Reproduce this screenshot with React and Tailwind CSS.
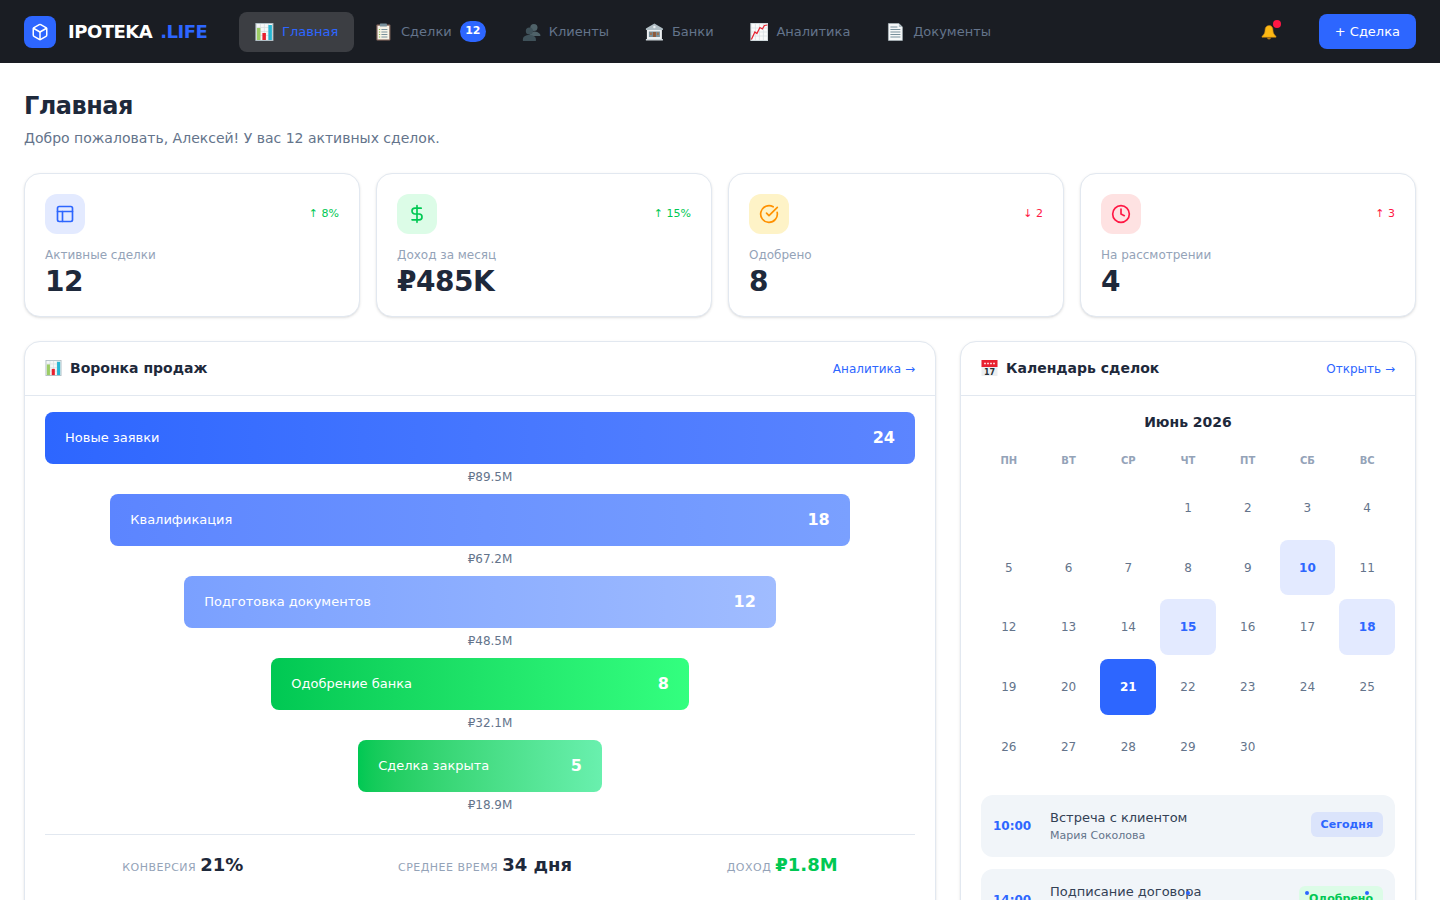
import { Box, CircleCheckBig, Clock, DollarSign, Layout } from "lucide-react";

// Рисованные эмодзи: ширина блока задаётся снаружи через className
function ChartEmoji({ className }) {
  return (
    <svg viewBox="0 0 18 18" className={className}>
      <rect x="0.5" y="0.5" width="17" height="17" fill="#f5f7f7" stroke="#b0bec5" />
      <path d="M1 4.5h16M1 8.5h16M1 12.5h16M5 1v16M9 1v16M13 1v16" stroke="#d5dde0" strokeWidth="0.7" />
      <rect x="1.5" y="5" width="3.5" height="12" fill="#9ccc65" />
      <rect x="7" y="10" width="3.5" height="7" fill="#e8202e" />
      <rect x="13" y="2" width="3.5" height="15" fill="#26b6d4" />
    </svg>
  );
}

function ClipboardEmoji({ className }) {
  return (
    <svg viewBox="0 0 18 18" className={className}>
      <rect x="2" y="1.5" width="14" height="16" rx="1" fill="#8d6e63" />
      <rect x="3.2" y="2.8" width="11.6" height="13.6" fill="#f7f3e8" />
      <rect x="5.5" y="0.5" width="7" height="3" rx="0.6" fill="#78909c" />
      <path d="M7 6.5h6M7 9h6M7 11.5h6M7 14h6" stroke="#78909c" strokeWidth="1" />
      <path d="M4.5 6.5h1.3M4.5 9h1.3M4.5 11.5h1.3M4.5 14h1.3" stroke="#8bc34a" strokeWidth="1" />
    </svg>
  );
}

function PeopleEmoji({ className }) {
  return (
    <svg viewBox="0 0 18 18" className={className}>
      <circle cx="11.5" cy="4.5" r="3.6" fill="#4f6269" />
      <path d="M7 13c0-3 2-4.5 4.5-4.5S18 10 18 12.5V13H7z" fill="#4f6269" />
      <circle cx="7" cy="8" r="3.6" fill="#3f5159" />
      <path d="M0.5 18v-1.5C0.5 13.5 3 12 7 12s6.5 1.5 6.5 4.5V18H0.5z" fill="#3f5159" />
    </svg>
  );
}

function BankEmoji({ className }) {
  return (
    <svg viewBox="0 0 18 18" className={className}>
      <path d="M9 0.5 17.5 5.5V7H0.5V5.5z" fill="#b0bec5" />
      <circle cx="9" cy="4" r="1.2" fill="#eceff1" />
      <rect x="1.5" y="7" width="15" height="9" fill="#eceff1" />
      <rect x="3.5" y="8.5" width="11" height="5.5" fill="#78909c" />
      <rect x="7.5" y="9" width="3" height="5" fill="#8d5a3c" />
      <rect x="4.5" y="9.5" width="2" height="2.5" fill="#a1704f" />
      <rect x="11.5" y="9.5" width="2" height="2.5" fill="#a1704f" />
      <rect x="0.5" y="16" width="17" height="1.5" fill="#cfd8dc" />
    </svg>
  );
}

function TrendEmoji({ className }) {
  return (
    <svg viewBox="0 0 18 18" className={className}>
      <rect x="0.5" y="0.5" width="17" height="17" fill="#fafafa" stroke="#cfd8dc" />
      <path d="M1 5h16M1 9h16M1 13h16M5 1v16M9 1v16M13 1v16" stroke="#d5dde0" strokeWidth="0.7" />
      <path d="M1 16.5 4.5 9 6.5 10.5 9.5 4.5 12 6 14 2.5 17 2" fill="none" stroke="#e8202e" strokeWidth="1.2" />
    </svg>
  );
}

function PageEmoji({ className }) {
  return (
    <svg viewBox="0 0 18 18" className={className}>
      <path d="M2 0.5h10.5L16 4v13.5H2z" fill="#f5f7f8" stroke="#b0bec5" strokeWidth="0.6" />
      <path d="M12.5 0.5V4H16z" fill="#b0bec5" />
      <path d="M4 4h7M4 6.5h10M4 9h10M4 11.5h10M4 14h10" stroke="#78909c" strokeWidth="1.1" />
    </svg>
  );
}

function BellEmoji({ className }) {
  return (
    <svg viewBox="0 0 16 16" className={className}>
      <path d="M8 1.5c-2.8 0-4 2.2-4 4.8 0 2.6-1 4.2-3 6v1h14v-1c-2-1.8-3-3.4-3-6 0-2.6-1.2-4.8-4-4.8z" fill="#fdb813" stroke="#b77a14" strokeWidth="0.6" />
      <path d="M6 13.5a2 2 0 0 0 4 0z" fill="#b77a14" />
    </svg>
  );
}

function CalendarEmoji({ className }) {
  return (
    <svg viewBox="0 0 16 16" className={className}>
      <rect x="0" y="0" width="16" height="16" fill="#eceff1" />
      <rect x="0" y="0" width="16" height="7" fill="#e8202e" />
      <path d="M2.5 3.5h11" stroke="#ffc9cd" strokeWidth="1.4" strokeDasharray="2 1" />
      <text x="8" y="14.6" textAnchor="middle" fontSize="8" fill="#263238">17</text>
    </svg>
  );
}

const navItems = [
  { icon: ChartEmoji, label: "Главная", active: true },
  { icon: ClipboardEmoji, label: "Сделки", badge: 12 },
  { icon: PeopleEmoji, label: "Клиенты" },
  { icon: BankEmoji, label: "Банки" },
  { icon: TrendEmoji, label: "Аналитика" },
  { icon: PageEmoji, label: "Документы" },
];

const stats = [
  { icon: Layout, box: "bg-[#e3eaff]", color: "text-[#2d66ff]", trend: "↑ 8%", trendColor: "text-[#00c853]", label: "Активные сделки", value: "12" },
  { icon: DollarSign, box: "bg-[#dcfce7]", color: "text-[#00c853]", trend: "↑ 15%", trendColor: "text-[#00c853]", label: "Доход за месяц", value: "₽485K" },
  { icon: CircleCheckBig, box: "bg-[#fef3c7]", color: "text-[#ff9100]", trend: "↓ 2", trendColor: "text-[#ff1744]", label: "Одобрено", value: "8" },
  { icon: Clock, box: "bg-[#fee2e2]", color: "text-[#ff1744]", trend: "↑ 3", trendColor: "text-[#ff1744]", label: "На рассмотрении", value: "4" },
];

const funnel = [
  { label: "Новые заявки", count: 24, amount: "₽89.5M", width: "w-full", bar: "from-[#2d66ff] to-[#5c85ff]" },
  { label: "Квалификация", count: 18, amount: "₽67.2M", width: "w-[85%]", bar: "from-[#5c85ff] to-[#7aa0ff]" },
  { label: "Подготовка документов", count: 12, amount: "₽48.5M", width: "w-[68%]", bar: "from-[#7aa0ff] to-[#a0bcff]" },
  { label: "Одобрение банка", count: 8, amount: "₽32.1M", width: "w-[48%]", bar: "from-[#00c853] to-[#33ff7f]" },
  { label: "Сделка закрыта", count: 5, amount: "₽18.9M", width: "w-[28%]", bar: "from-[#00c853] to-[#69f0ae]" },
];

const weekDays = ["ПН", "ВТ", "СР", "ЧТ", "ПТ", "СБ", "ВС"];
const marked = [10, 15, 18];
const days = [null, null, null, ...Array.from({ length: 30 }, (_, i) => i + 1)];

function Header() {
  return (
    <header className="flex h-[63px] items-center justify-between bg-[#1a1d23] px-6">
      <div className="flex items-center">
        <div className="flex items-center gap-3">
          <div className="flex h-8 w-8 items-center justify-center rounded-lg bg-[#2d66ff] text-white">
            <Box size={18} strokeWidth={2} />
          </div>
          <div className="flex gap-2 text-lg font-bold tracking-[-0.5px]">
            <span className="text-white">IPOTEKA</span>
            <span className="text-[#2d66ff]">.LIFE</span>
          </div>
        </div>
        <nav className="ml-8 flex gap-1">
          {navItems.map((item) => {
            const Icon = item.icon;
            return (
              <div
                key={item.label}
                className={`flex h-10 items-center gap-2 rounded-lg px-4 text-[13px] ${
                  item.active ? "bg-white/15 text-[#2d66ff]" : "text-[#64748b]"
                }`}
              >
                <Icon className="h-[18px] w-[18.8px]" />
                {item.label}
                {item.badge && (
                  <span className="rounded-full bg-[#2d66ff] px-[5.5px] py-0.5 text-[11px] font-bold text-white">
                    {item.badge}
                  </span>
                )}
              </div>
            );
          })}
        </nav>
      </div>
      <div className="flex items-center gap-[42px]">
        <div className="relative">
          <BellEmoji className="h-4 w-4" />
          <span className="absolute -top-1 -right-1 h-2 w-2 rounded-full bg-[#ff1744]" />
        </div>
        <button className="h-[35px] rounded-lg bg-[#2d66ff] px-4 text-[13px] text-white">+ Сделка</button>
      </div>
    </header>
  );
}

function StatCard({ stat }) {
  const Icon = stat.icon;
  return (
    <div className="h-[144px] rounded-2xl border border-[#e2e8f0] bg-white p-5 shadow-sm">
      <div className="flex items-center justify-between">
        <div className={`flex h-10 w-10 items-center justify-center rounded-xl ${stat.box} ${stat.color}`}>
          <Icon size={20} strokeWidth={2} />
        </div>
        <span className={`text-[11px] ${stat.trendColor}`}>{stat.trend}</span>
      </div>
      <p className="mt-3 text-xs leading-[18px] text-[#94a3b8]">{stat.label}</p>
      <p className="text-[28px] leading-[36px] font-bold tracking-[-0.5px] text-[#1e293b]">{stat.value}</p>
    </div>
  );
}

function CardHead({ icon: Icon, title, link }) {
  return (
    <div className="flex h-[54px] items-center justify-between border-b border-[#e2e8f0] px-5">
      <h3 className="flex items-center gap-2 pb-0.5 text-sm font-bold text-[#1e293b]">
        <Icon className="h-4 w-[17px]" />
        {title}
      </h3>
      <span className="text-xs text-[#2d66ff]">{link}</span>
    </div>
  );
}

function Funnel() {
  return (
    <div className="rounded-2xl border border-[#e2e8f0] bg-white shadow-sm">
      <CardHead icon={ChartEmoji} title="Воронка продаж" link="Аналитика →" />
      <div className="px-5 pt-4">
        {funnel.map((step) => (
          <div key={step.label} className="flex flex-col items-center">
            <div className={`flex h-[52px] items-center justify-between rounded-lg bg-gradient-to-r px-5 text-white ${step.width} ${step.bar}`}>
              <span className="text-[13px]">{step.label}</span>
              <span className="text-base font-bold">{step.count}</span>
            </div>
            <div className="ml-5 h-[30px] pt-1 text-xs leading-[18px] text-[#64748b]">{step.amount}</div>
          </div>
        ))}
        <div className="mt-3 flex justify-around border-t border-[#e2e8f0] pt-4 pb-6">
          <FunnelStat label="КОНВЕРСИЯ" value="21%" />
          <FunnelStat label="СРЕДНЕЕ ВРЕМЯ" value="34 дня" />
          <FunnelStat label="ДОХОД" value="₽1.8M" color="text-[#00c853]" />
        </div>
      </div>
    </div>
  );
}

function FunnelStat({ label, value, color = "text-[#1e293b]" }) {
  return (
    <div className="flex items-baseline gap-1">
      <span className="text-[11px] tracking-[0.5px] text-[#94a3b8]">{label}</span>
      <span className={`text-lg font-bold ${color}`}>{value}</span>
    </div>
  );
}

function EventRow({ time, title, client, tag, tagClass }) {
  return (
    <div className="flex h-[62px] items-center rounded-xl bg-[#f1f5f9] px-3">
      <span className="w-[57px] text-xs font-bold text-[#2d66ff]">{time}</span>
      <div className="flex-1 pt-0.5">
        <p className="text-[13px] leading-[18px] text-[#334155]">{title}</p>
        <p className="text-[11px] leading-[18px] text-[#64748b]">{client}</p>
      </div>
      <span className={`mb-[2px] rounded-md px-2.5 py-1 text-[11px] leading-[17px] font-bold ${tagClass}`}>{tag}</span>
    </div>
  );
}

function Calendar() {
  return (
    <div className="relative rounded-2xl border border-[#e2e8f0] bg-white shadow-sm">
      <CardHead icon={CalendarEmoji} title="Календарь сделок" link="Открыть →" />
      <div className="px-5 pt-4">
        <p className="mb-[13px] text-center text-sm leading-5 font-bold text-[#1e293b]">Июнь 2026</p>
        <div className="grid grid-cols-7 gap-1">
          {weekDays.map((d) => (
            <div key={d} className="py-[7.5px] text-center text-[10px] leading-4 font-bold text-[#94a3b8]">{d}</div>
          ))}
          {days.map((d, i) => (
            <div
              key={i}
              className={`flex aspect-square items-center justify-center rounded-lg text-xs ${
                d === 21
                  ? "bg-[#2d66ff] font-bold text-white"
                  : marked.includes(d)
                    ? "bg-[#e3eaff] font-bold text-[#2d66ff]"
                    : "text-[#64748b]"
              }`}
            >
              {d}
            </div>
          ))}
        </div>
        <div className="mt-5 flex flex-col gap-3">
          <EventRow time="10:00" title="Встреча с клиентом" client="Мария Соколова" tag="Сегодня" tagClass="bg-[#dbe4fb] text-[#2d66ff]" />
          <EventRow time="14:00" title="Подписание договора" client="Иван Петров" tag="Одобрено" tagClass="bg-[#dcfce7] text-[#00c853]" />
        </div>
      </div>
      {/* точки событий поверх списка */}
      <span className="absolute top-[549px] left-[344px] h-1 w-1 rounded-full bg-[#2d66ff]" />
      <span className="absolute top-[549px] left-[225px] h-1 w-1 rounded-full bg-[#2d66ff]" />
      <span className="absolute top-[549px] left-[404px] h-1 w-1 rounded-full bg-[#2d66ff]" />
    </div>
  );
}

export default function App() {
  return (
    <div className="h-[900px] overflow-hidden bg-white font-['DejaVu_Sans',sans-serif]">
      <Header />
      <main className="p-6">
        <h1 className="text-2xl leading-[38px] font-bold tracking-[-0.5px] text-[#1e293b]">Главная</h1>
        <p className="text-sm leading-[26px] text-[#64748b]">Добро пожаловать, Алексей! У вас 12 активных сделок.</p>
        <div className="mt-[22px] grid grid-cols-4 gap-4">
          {stats.map((stat) => (
            <StatCard key={stat.label} stat={stat} />
          ))}
        </div>
        <div className="mt-6 grid grid-cols-[2fr_1fr] gap-6">
          <Funnel />
          <Calendar />
        </div>
      </main>
    </div>
  );
}
